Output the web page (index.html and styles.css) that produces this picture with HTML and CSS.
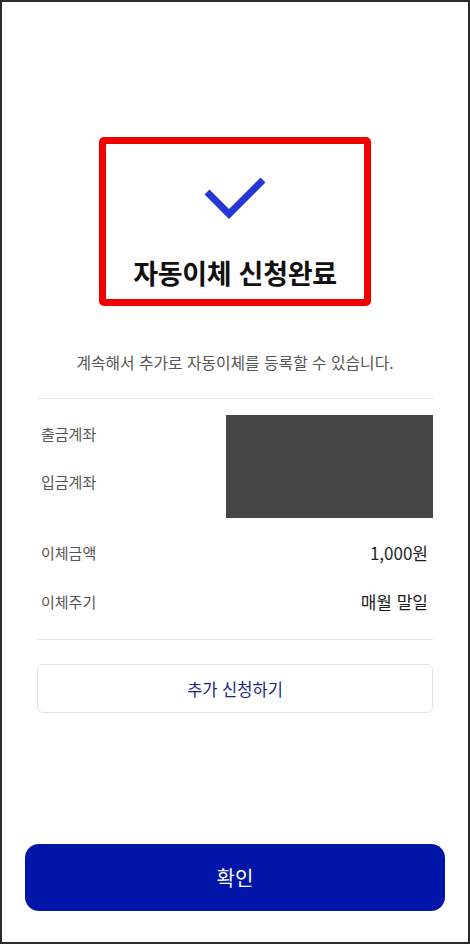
FILE: index.html
```html
<!DOCTYPE html>
<html lang="ko">
<head>
<meta charset="utf-8">
<title>자동이체 신청완료</title>
<link rel="stylesheet" href="styles.css">
</head>
<body>
<div class="screen">
  <div class="done-box">
    <svg class="check" width="68" height="48" viewBox="0 0 68 48" aria-hidden="true">
      <polyline points="6,18 28,40 62,6" fill="none" stroke="#2537d6" stroke-width="7" stroke-linecap="butt" stroke-linejoin="miter"/>
    </svg>
    <h1 class="title">자동이체 신청완료</h1>
  </div>
  <p class="subtitle">계속해서 추가로 자동이체를 등록할 수 있습니다.</p>
  <div class="section">
    <div class="divider"></div>
    <div class="accounts">
      <div class="account-labels">
        <div class="label">출금계좌</div>
        <div class="label">입금계좌</div>
      </div>
      <div class="masked"></div>
    </div>
    <div class="rows">
      <div class="row"><span class="label">이체금액</span><span class="value">1,000원</span></div>
      <div class="row"><span class="label">이체주기</span><span class="value">매월 말일</span></div>
    </div>
    <div class="divider divider-2"></div>
    <button class="more-btn" type="button">추가 신청하기</button>
  </div>
  <button class="confirm-btn" type="button">확인</button>
</div>
</body>
</html>
```

FILE: styles.css
```css
* { box-sizing: border-box; }
html, body {
  margin: 0;
  padding: 0;
  background: #ffffff;
}
body {
  font-family: "Noto Sans CJK KR", "Noto Sans", sans-serif;
}
.screen {
  width: 470px;
  height: 944px;
  border: 2px solid #2b2b2b;
  display: flex;
  flex-direction: column;
  align-items: center;
  background: #ffffff;
}
.done-box {
  margin-top: 135px;
  width: 272px;
  height: 169px;
  border: 7px solid #f00000;
  border-radius: 5px;
  display: flex;
  flex-direction: column;
  align-items: center;
  padding-top: 30px;
}
.check {
  display: block;
}
.title {
  margin: 34px 0 0;
  font-size: 27px;
  line-height: 34px;
  font-weight: 700;
  color: #111111;
  letter-spacing: -0.3px;
}
.subtitle {
  margin: 46px 0 0;
  font-size: 15.8px;
  line-height: 22px;
  color: #555555;
}
.section {
  align-self: stretch;
  padding: 0 35px;
  display: flex;
  flex-direction: column;
}
.divider {
  height: 1px;
  background: #e6e6e6;
  margin-top: 24px;
}
.accounts {
  display: flex;
  margin-top: 16px;
}
.account-labels {
  display: flex;
  flex-direction: column;
  gap: 26px;
  padding: 8px 0 0 4px;
}
.label {
  font-size: 15px;
  line-height: 22px;
  color: #555555;
}
.masked {
  margin-left: auto;
  width: 207px;
  height: 103px;
  background: #454545;
}
.rows {
  display: flex;
  flex-direction: column;
  gap: 23px;
  margin-top: 22px;
  padding: 0 5px 0 4px;
}
.row {
  display: flex;
  justify-content: space-between;
  align-items: center;
  height: 26px;
}
.value {
  font-size: 17px;
  line-height: 26px;
  color: #1e1e1e;
}
.divider-2 {
  margin-top: 24px;
}
.more-btn {
  margin-top: 24px;
  height: 49px;
  border: 1px solid #e3e3e6;
  border-radius: 6px;
  background: #ffffff;
  font-family: inherit;
  font-size: 16.5px;
  color: #1a1f85;
  padding: 0;
}
.confirm-btn {
  margin-top: auto;
  margin-bottom: 31px;
  width: 420px;
  height: 67px;
  border: none;
  border-radius: 14px;
  background: #0016a8;
  color: #ffffff;
  font-family: inherit;
  font-size: 20px;
  padding: 0;
}
```
